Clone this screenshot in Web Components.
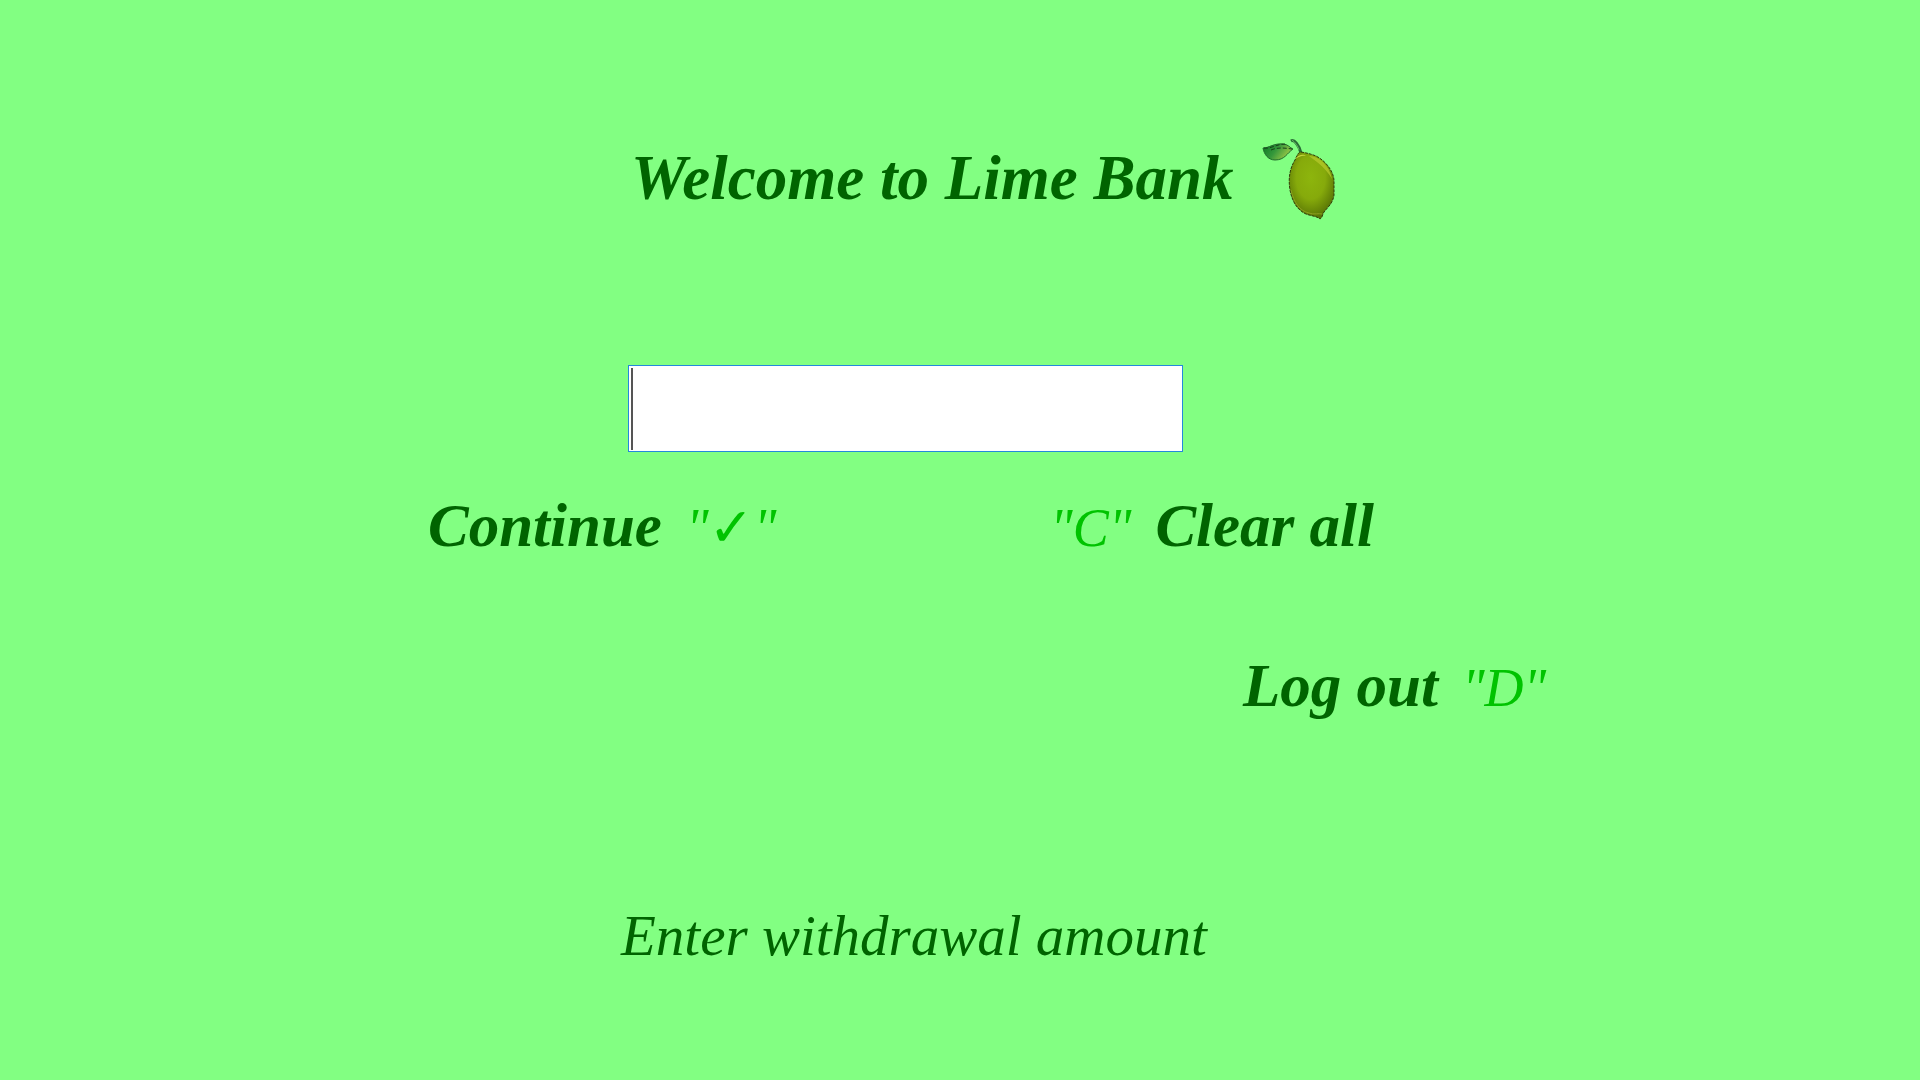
<!DOCTYPE html>
<html lang="en">
<head>
<meta charset="utf-8">
<title>Lime Bank</title>
<style>
html, body { margin: 0; min-height: 100%; background: #82ff82; }
body { font-family: "Monotype Corsiva", "Liberation Serif", "DejaVu Sans", serif; font-style: italic; color: #006400; }
</style>
</head>
<body>
<bank-screen></bank-screen>

<template id="screen">
<style>
:host { display: block; padding: 136px 0 64px; --key: #00c300; }
header, .entry, .actions, .session, .message { display: grid; }
header { grid-template-columns: 631fr 1289fr; margin-bottom: 145px; }
.entry { grid-template-columns: 628fr 555fr 737fr; margin-bottom: 38px; }
.actions { grid-template-columns: 428fr 622fr 870fr; margin-bottom: 86px; }
.session { grid-template-columns: 1243fr 677fr; margin-bottom: 176px; }
.message { grid-template-columns: 621fr 1299fr; }
header > *, .entry > *, .actions > :first-child, .session > *, .message > * { grid-column-start: 2; }
p { margin: 0; font-size: 57px; line-height: 72px; white-space: nowrap; }
</style>
<header><bank-title>Welcome to Lime Bank</bank-title></header>
<div class="entry"><amount-field></amount-field></div>
<div class="actions">
<key-action>Continue<span slot="after">"✓"</span></key-action>
<key-action><span slot="before">"C"</span>Clear all</key-action>
</div>
<div class="session"><key-action>Log out<span slot="after">"D"</span></key-action></div>
<div class="message"><p role="status">Enter withdrawal amount</p></div>
</template>

<template id="title">
<style>
:host { display: flex; align-items: center; gap: 26px; }
h1 { margin: 0; font-size: 63px; line-height: 72px; font-weight: bold; white-space: nowrap; }
</style>
<h1><slot></slot></h1>
<lime-logo></lime-logo>
</template>

<template id="logo">
<style>:host { display: block; } svg { display: block; }</style>
<svg width="78" height="84" viewBox="0 0 78 84" aria-hidden="true">
<defs>
<radialGradient id="skin" cx=".48" cy=".38" r=".65"><stop offset="0" stop-color="#8db50d"/><stop offset=".5" stop-color="#86aa0b"/><stop offset="1" stop-color="#526d04"/></radialGradient>
<linearGradient id="leaf" x1="0" y1="0" x2="1" y2=".4"><stop offset="0" stop-color="#087922"/><stop offset=".5" stop-color="#35973b"/><stop offset="1" stop-color="#9fca48"/></linearGradient>
</defs>
<path d="M31 5C34 3 39 9 41 17" fill="none" stroke="#286c36" stroke-width="3"/>
<path d="M32 4C35 6 38 10 39 14" fill="none" stroke="#62b962" stroke-width="1"/>
<path d="M3 12C9 12 14 7 23 8C28 8 30 12 33 13C27 17 25 24 15 24C8 24 4 18 3 12Z" fill="url(#leaf)" stroke="#216b2b" stroke-width="1"/>
<path d="M4 12C11 13 17 8 25 8M11 14C18 11 25 12 32 13" fill="none" stroke="#163d18" stroke-width="1" stroke-dasharray="4 2"/>
<path d="M41 16C47 17 51 18 56 20C66 25 74 36 74 45V59C73 67 68 71 64 76C62 79 63 81 60 83C57 80 51 80 46 78C37 74 32 65 30 54C28 42 30 32 35 24C37 20 38 16 41 16Z" fill="url(#skin)" stroke="#303b0b" stroke-width="1" stroke-dasharray="3 1"/>
<path d="M49 20C60 20 70 31 72 43C65 31 57 26 49 20Z" fill="#b6c82b" opacity=".75"/>
<path d="M35 23C39 18 44 18 46 20C42 19 39 21 35 23Z" fill="#c5d63e"/>
<path d="M31 54C34 67 40 75 49 77C54 79 59 77 62 78" fill="none" stroke="#8d9e20" stroke-width="1"/>
</svg>
</template>

<template id="field">
<style>
:host { display: block; }
input { display: block; box-sizing: border-box; width: 100%; height: 87px; padding: 0 4px; border: 1px solid #2488dc; border-radius: 0; outline: none; font: inherit; font-size: 63px; color: inherit;
  background: linear-gradient(#555, #555) 2px center / 2px 82px no-repeat #fff; }
</style>
<input type="text" inputmode="decimal" aria-label="Withdrawal amount">
</template>

<template id="action">
<style>
:host { display: block; }
button { display: flex; align-items: baseline; gap: 24px; margin: 0; padding: 0; border: 0; background: none; color: inherit; font: inherit; font-size: 61px; line-height: 72px; font-weight: bold; white-space: nowrap; cursor: pointer; }
::slotted(span) { color: var(--key); font-size: 54px; font-weight: normal; }
</style>
<button type="button"><slot name="before"></slot><span><slot></slot></span><slot name="after"></slot></button>
</template>

<script>
const define = (name, id) => customElements.define(name, class extends HTMLElement {
  constructor() {
    super();
    this.attachShadow({ mode: "open" }).append(document.getElementById(id).content.cloneNode(true));
  }
});
define("lime-logo", "logo");
define("bank-title", "title");
define("amount-field", "field");
define("key-action", "action");
define("bank-screen", "screen");
</script>
</body>
</html>
